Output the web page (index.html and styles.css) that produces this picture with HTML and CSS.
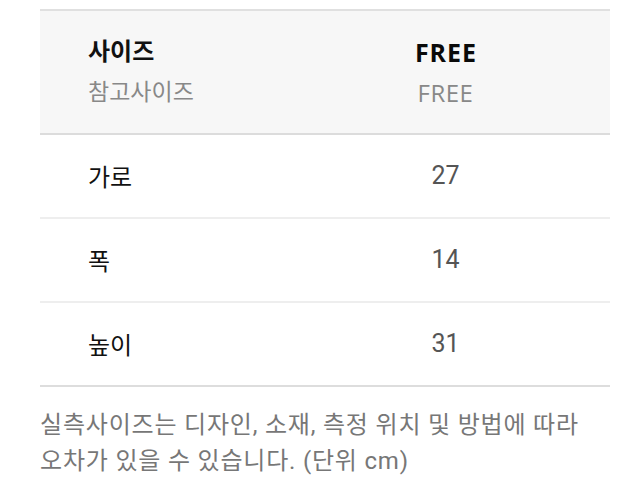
FILE: index.html
```html
<!DOCTYPE html>
<html lang="ko">
<head>
<meta charset="utf-8">
<link rel="stylesheet" href="styles.css">
</head>
<body>
<div class="page">
  <table class="size-table">
    <thead>
      <tr class="head">
        <th class="label">
          <div class="title">사이즈</div>
          <div class="sub">참고사이즈</div>
        </th>
        <th class="value">
          <div class="title latin">FREE</div>
          <div class="sub latin">FREE</div>
        </th>
      </tr>
    </thead>
    <tbody>
      <tr><td class="label">가로</td><td class="value">27</td></tr>
      <tr><td class="label">폭</td><td class="value">14</td></tr>
      <tr><td class="label">높이</td><td class="value">31</td></tr>
    </tbody>
  </table>
  <p class="note">실측사이즈는 디자인, 소재, 측정 위치 및 방법에 따라 오차가 있을 수 있습니다. (단위 cm)</p>
</div>
</body>
</html>
```

FILE: styles.css
```css
html, body {
  margin: 0;
  padding: 0;
  background: #ffffff;
}
body {
  font-family: Roboto, "Noto Sans CJK KR", sans-serif;
  color: #111;
}
.page {
  padding: 9px 30px 0 40px;
}
.size-table {
  width: 570px;
  border-collapse: collapse;
  table-layout: fixed;
}
.size-table .label {
  width: 192px;
  text-align: left;
  padding-left: 48px;
}
.size-table .value {
  text-align: center;
}
.head {
  background: #f7f7f7;
  border-top: 2px solid #e0e0e0;
  border-bottom: 2px solid #dcdcdc;
}
.head th {
  height: 122px;
  font-weight: normal;
  vertical-align: middle;
  padding-top: 0;
  padding-bottom: 0;
}
.title {
  font-size: 24px;
  font-weight: 700;
  line-height: 40px;
  color: #111;
}
.sub {
  font-size: 23px;
  line-height: 40px;
  color: #888;
  margin-top: 1px;
}
.latin {
  font-family: "Open Sans", "Noto Sans CJK KR", sans-serif;
}
.title.latin {
  font-size: 25px;
  letter-spacing: 1px;
  text-indent: 1px;
  color: #0a0a0a;
}
.sub.latin {
  font-size: 24px;
  letter-spacing: 0.5px;
}
tbody td {
  height: 81px;
  font-size: 24px;
  padding: 0 0 1px 0;
  border-bottom: 2px solid #eeeeee;
}
tbody .label {
  color: #111;
  padding-left: 48px;
}
tbody .value {
  color: #555;
  font-size: 25px;
}
tbody tr:last-child td {
  border-bottom: 2px solid #dddddd;
}
.note {
  margin: 20px 0 0 0;
  width: 570px;
  font-size: 24px;
  letter-spacing: 0.8px;
  line-height: 36px;
  color: #777;
  word-break: keep-all;
}
```
